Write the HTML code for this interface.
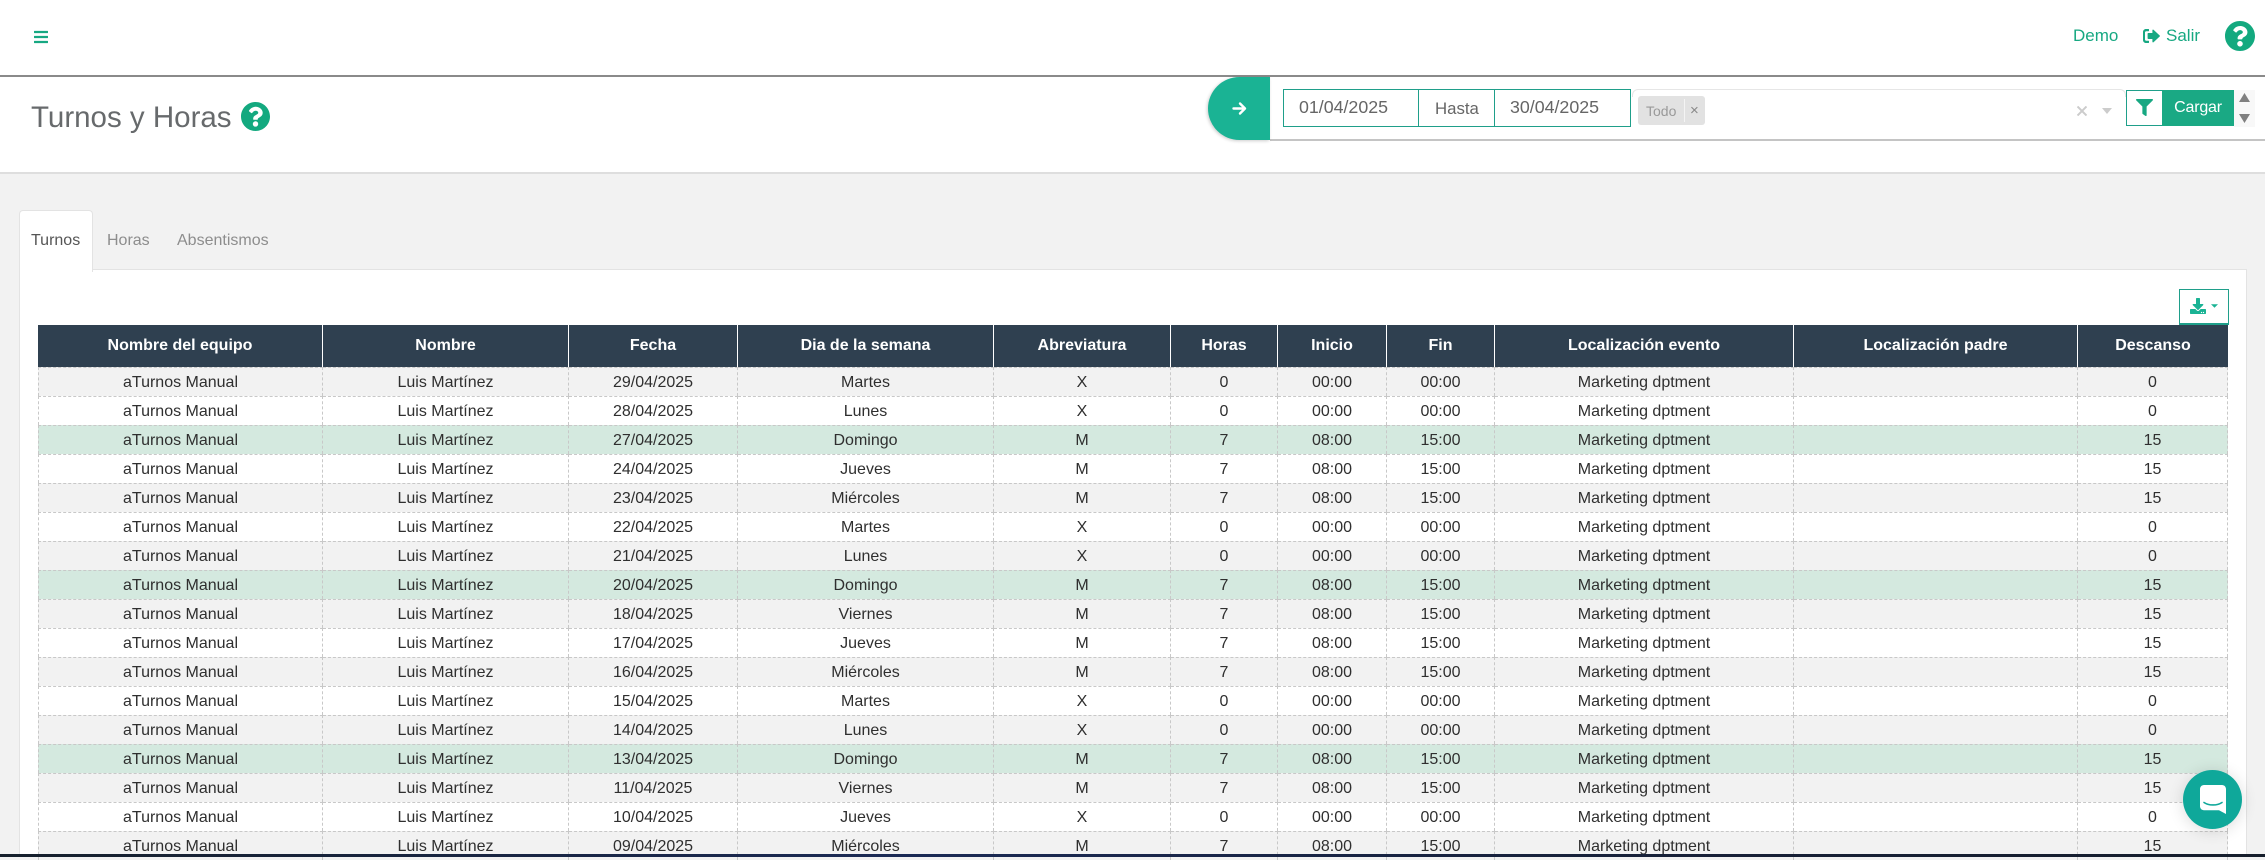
<!DOCTYPE html>
<html lang="es"><head><meta charset="utf-8"><title>Turnos y Horas</title>
<style>
*{box-sizing:border-box}
html,body{margin:0;padding:0;width:2265px;height:857px;overflow:hidden;background:#f2f2f2;font-family:"Liberation Sans",Arial,sans-serif;color:#333}
.abs{position:absolute}
svg{display:block}
#top{left:0;top:0;width:2265px;height:77px;background:#fff;border-bottom:2px solid #8a8a8a}
#sub{left:0;top:77px;width:2265px;height:97px;background:#fff;border-bottom:2px solid #dedede}
.g{color:#17a882}
h1{position:absolute;left:31px;top:98px;margin:0;font-weight:400;font-size:29.5px;line-height:40px;color:#676a6c}
#bar{left:1270px;top:77px;width:995px;height:64px;background:#fff;border-bottom:2px solid #c4c4c4}
#pill{left:1208px;top:77px;width:62px;height:63px;background:#1ab394;border-radius:32px 0 0 32px;box-shadow:-1px 1px 3px rgba(0,0,0,.2)}
.box{position:absolute;top:89px;height:38px;border:1px solid #1f9f8a;background:#fff;font-size:17.800px;line-height:35px;color:#666}
#ms{left:1632px;top:89px;width:494px;height:8px;border:1px solid #e6e6e6;border-bottom:0;border-radius:6px 6px 0 0;background:#fff}
#chip{left:1638px;top:96px;width:67px;height:29px;background:#e2e2e2;border-radius:3px;font-size:14px;color:#999;line-height:30px}
#tabs{left:19px;top:210px;width:74px;height:62px;background:#fff;border:1px solid #e3e3e3;border-bottom:0;border-radius:4px 4px 0 0;z-index:2}
.tab{position:absolute;top:229px;font-size:16px;line-height:24px;color:#8d8d8d;z-index:3}
#panel{left:19px;top:269px;width:2228px;height:588px;background:#fff;border:1px solid #e3e3e3;border-bottom:0}
#dl{left:2179px;top:289px;width:50px;height:36px;border:1px solid #1f9f8a;border-bottom:2px solid #1f9f8a;background:#fff}
table{position:absolute;left:38px;top:325px;width:2190px;border-collapse:separate;border-spacing:0;table-layout:fixed;font-size:16px}
th{height:42px;background:#2f4050;color:#fff;font-weight:700;text-align:center;padding:0;border-right:1px solid #fff}
th:last-child{border-right:0}
td{height:29px;padding:1px 0 0;text-align:center;border-right:1px dashed #c8c8c8;border-top:1px dashed #c8c8c8;color:#2f2f2f;white-space:nowrap}
td:first-child{border-left:1px dashed #c8c8c8}
.o td{background:#f2f2f2}.w td{background:#fff}.v td{background:#d4e9df}
#dark{left:0;top:854px;width:2265px;height:3px;background:linear-gradient(90deg,#16202c,#1b2a55 40%,#17213a 70%,#161e2c);z-index:9}
#chat{left:2183px;top:770px;width:59px;height:59px;border-radius:50%;background:#0fa89a;box-shadow:0 2px 16px rgba(0,0,0,.14);z-index:8}
</style></head><body>

<div class="abs" id="top"></div>
<svg class="abs" style="left:34px;top:29px" width="14" height="16" viewBox="0 0 448 512" fill="#17a882"><path d="M16 132h416c8.837 0 16-7.163 16-16V76c0-8.837-7.163-16-16-16H16C7.163 60 0 67.163 0 76v40c0 8.837 7.163 16 16 16zm0 160h416c8.837 0 16-7.163 16-16v-40c0-8.837-7.163-16-16-16H16c-8.837 0-16 7.163-16 16v40c0 8.837 7.163 16 16 16zm0 160h416c8.837 0 16-7.163 16-16v-40c0-8.837-7.163-16-16-16H16c-8.837 0-16 7.163-16 16v40c0 8.837 7.163 16 16 16z"/></svg>
<div class="abs g" style="left:2073px;top:26px;font-size:17px;line-height:20px">Demo</div>
<svg class="abs" style="left:2143px;top:29px" width="17" height="14" viewBox="0 0 17 14" fill="#17a882"><path d="M5.500 0H3C1.300 0 0 1.300 0 3v8c0 1.700 1.300 3 3 3h2.500c.3 0 .5-.2.500-.5v-1.300c0-.3-.2-.5-.5-.5H3.200c-.7 0-1.200-.5-1.200-1.200V3.500c0-.7.500-1.200 1.200-1.200h2.300c.3 0 .5-.2.500-.5V.5c0-.3-.2-.5-.5-.5z"/><path d="M10.500.8c-.4-.4-1.100-.1-1.100.5V4H5.300c-.4 0-.7.300-.7.700v4.600c0 .4.300.7.700.7h4.100v2.700c0 .6.700.9 1.100.5l6.200-5.700c.3-.3.300-.7 0-1z"/></svg>
<div class="abs g" style="left:2166px;top:26px;font-size:17px;line-height:20px">Salir</div>
<svg class="abs" style="left:2225px;top:21px" width="30" height="30" viewBox="8 8 496 496" fill="#13a97f"><path d="M504 256c0 136.997-111.043 248-248 248S8 392.997 8 256C8 119.083 119.043 8 256 8s248 111.083 248 248zM262.655 90c-54.497 0-89.255 22.957-116.549 63.758-3.536 5.286-2.353 12.415 2.715 16.258l34.699 26.31c5.205 3.947 12.621 3.008 16.665-2.122 17.864-22.658 30.113-35.797 57.303-35.797 20.429 0 45.698 13.148 45.698 32.958 0 14.976-12.363 22.667-32.534 33.976C247.128 238.528 216 254.941 216 296v4c0 6.627 5.373 12 12 12h56c6.627 0 12-5.373 12-12v-1.333c0-28.462 83.186-29.647 83.186-106.667 0-58.002-60.165-102-116.531-102zM256 338c-25.365 0-46 20.635-46 46 0 25.364 20.635 46 46 46s46-20.636 46-46c0-25.365-20.635-46-46-46z"/></svg>

<div class="abs" id="sub"></div>
<h1>Turnos y Horas</h1>
<svg class="abs" style="left:241px;top:102px" width="29" height="29" viewBox="8 8 496 496" fill="#13a97f"><path d="M504 256c0 136.997-111.043 248-248 248S8 392.997 8 256C8 119.083 119.043 8 256 8s248 111.083 248 248zM262.655 90c-54.497 0-89.255 22.957-116.549 63.758-3.536 5.286-2.353 12.415 2.715 16.258l34.699 26.31c5.205 3.947 12.621 3.008 16.665-2.122 17.864-22.658 30.113-35.797 57.303-35.797 20.429 0 45.698 13.148 45.698 32.958 0 14.976-12.363 22.667-32.534 33.976C247.128 238.528 216 254.941 216 296v4c0 6.627 5.373 12 12 12h56c6.627 0 12-5.373 12-12v-1.333c0-28.462 83.186-29.647 83.186-106.667 0-58.002-60.165-102-116.531-102zM256 338c-25.365 0-46 20.635-46 46 0 25.364 20.635 46 46 46s46-20.636 46-46c0-25.365-20.635-46-46-46z"/></svg>

<div class="abs" id="bar"></div>
<div class="abs" id="pill"></div>
<svg class="abs" style="left:1232px;top:101px" width="15" height="15" viewBox="0 0 15 15" fill="none" stroke="#fff" stroke-width="2.400" stroke-linecap="round" stroke-linejoin="round"><path d="M1.500 7.500h11M8 2.500l5 5-5 5"/></svg>
<div class="box" style="left:1283px;width:136px;padding-left:15px">01/04/2025</div>
<div class="box" style="left:1418px;width:77px;padding-left:16px;font-size:16.800px;line-height:38px">Hasta</div>
<div class="box" style="left:1494px;width:137px;padding-left:15px">30/04/2025</div>
<div class="abs" id="ms"></div>
<div class="abs" id="chip"><span style="position:absolute;left:8px">Todo</span><span style="position:absolute;left:46px;top:3px;height:23px;border-left:1px solid #f4f4f4"></span><span style="position:absolute;left:52px;font-size:15px;color:#888">×</span></div>
<svg class="abs" style="left:2077px;top:106px" width="10" height="10" viewBox="0 0 10 10" stroke="#ccc" stroke-width="2"><path d="M.5.500l9 9M9.500.500l-9 9"/></svg>
<svg class="abs" style="left:2102px;top:108px" width="10" height="6" viewBox="0 0 10 6" fill="#ccc"><path d="M0 0h10L5 6z"/></svg>
<div class="abs" style="left:2126px;top:90px;width:37px;height:36px;background:#fff;border:1px solid #1f9f8a"></div>
<svg class="abs" style="left:2136px;top:99px" width="17" height="17" viewBox="0 0 512 512" fill="#17a882"><path d="M487.976 0H24.028C2.710 0-8.047 25.866 7.058 40.971L192 225.941V432c0 7.831 3.821 15.170 10.237 19.662l80 55.980C298.020 518.690 320 507.493 320 487.980V225.941l184.947-184.970C520.021 25.896 509.338 0 487.976 0z"/></svg>
<div class="abs" style="left:2162px;top:90px;width:72px;height:36px;background:#1aa984;color:#fff;font-size:16px;line-height:36px;text-align:center;letter-spacing:-.2px">Cargar</div>
<div class="abs" style="left:2234px;top:90px;width:21px;height:37px;background:#f8f8f8"></div>
<svg class="abs" style="left:2238px;top:93px" width="13" height="30" viewBox="0 0 13 30" fill="#808080"><path d="M1 9L6.500 0 12 9zM1 21h11L6.500 30z"/></svg>

<div class="abs" id="panel"></div>
<div class="abs" id="tabs"></div>
<div class="tab" style="left:31px;color:#555">Turnos</div>
<div class="tab" style="left:107px">Horas</div>
<div class="tab" style="left:177px">Absentismos</div>

<div class="abs" id="dl"></div>
<svg class="abs" style="left:2190px;top:298px" width="16" height="16" viewBox="0 0 512 512" fill="#1ab394"><path d="M216 0h80c13.300 0 24 10.700 24 24v168h87.700c17.800 0 26.700 21.500 14.100 34.100L269.700 378.300c-7.500 7.500-19.800 7.500-27.300 0L90.100 226.100c-12.600-12.600-3.700-34.100 14.100-34.100H192V24c0-13.300 10.700-24 24-24zm296 376v112c0 13.300-10.700 24-24 24H24c-13.300 0-24-10.700-24-24V376c0-13.300 10.700-24 24-24h146.700l49 49c20.100 20.100 52.500 20.100 72.600 0l49-49H488c13.300 0 24 10.700 24 24zm-124 88c0-11-9-20-20-20s-20 9-20 20 9 20 20 20 20-9 20-20zm64 0c0-11-9-20-20-20s-20 9-20 20 9 20 20 20 20-9 20-20z"/></svg>
<svg class="abs" style="left:2211px;top:304px" width="7" height="4" viewBox="0 0 8 4" fill="#1ab394"><path d="M0 0h8L4 4z"/></svg>

<table>
<colgroup><col style="width:285px"><col style="width:246px"><col style="width:169px"><col style="width:256px"><col style="width:177px"><col style="width:107px"><col style="width:109px"><col style="width:108px"><col style="width:299px"><col style="width:284px"><col style="width:150px"></colgroup>
<thead><tr><th>Nombre del equipo</th><th>Nombre</th><th>Fecha</th><th>Dia de la semana</th><th>Abreviatura</th><th>Horas</th><th>Inicio</th><th>Fin</th><th>Localización evento</th><th>Localización padre</th><th>Descanso</th></tr></thead>
<tbody>
<tr class="o"><td>aTurnos Manual</td><td>Luis Martínez</td><td>29/04/2025</td><td>Martes</td><td>X</td><td>0</td><td>00:00</td><td>00:00</td><td>Marketing dptment</td><td></td><td>0</td></tr>
<tr class="w"><td>aTurnos Manual</td><td>Luis Martínez</td><td>28/04/2025</td><td>Lunes</td><td>X</td><td>0</td><td>00:00</td><td>00:00</td><td>Marketing dptment</td><td></td><td>0</td></tr>
<tr class="v"><td>aTurnos Manual</td><td>Luis Martínez</td><td>27/04/2025</td><td>Domingo</td><td>M</td><td>7</td><td>08:00</td><td>15:00</td><td>Marketing dptment</td><td></td><td>15</td></tr>
<tr class="w"><td>aTurnos Manual</td><td>Luis Martínez</td><td>24/04/2025</td><td>Jueves</td><td>M</td><td>7</td><td>08:00</td><td>15:00</td><td>Marketing dptment</td><td></td><td>15</td></tr>
<tr class="o"><td>aTurnos Manual</td><td>Luis Martínez</td><td>23/04/2025</td><td>Miércoles</td><td>M</td><td>7</td><td>08:00</td><td>15:00</td><td>Marketing dptment</td><td></td><td>15</td></tr>
<tr class="w"><td>aTurnos Manual</td><td>Luis Martínez</td><td>22/04/2025</td><td>Martes</td><td>X</td><td>0</td><td>00:00</td><td>00:00</td><td>Marketing dptment</td><td></td><td>0</td></tr>
<tr class="o"><td>aTurnos Manual</td><td>Luis Martínez</td><td>21/04/2025</td><td>Lunes</td><td>X</td><td>0</td><td>00:00</td><td>00:00</td><td>Marketing dptment</td><td></td><td>0</td></tr>
<tr class="v"><td>aTurnos Manual</td><td>Luis Martínez</td><td>20/04/2025</td><td>Domingo</td><td>M</td><td>7</td><td>08:00</td><td>15:00</td><td>Marketing dptment</td><td></td><td>15</td></tr>
<tr class="o"><td>aTurnos Manual</td><td>Luis Martínez</td><td>18/04/2025</td><td>Viernes</td><td>M</td><td>7</td><td>08:00</td><td>15:00</td><td>Marketing dptment</td><td></td><td>15</td></tr>
<tr class="w"><td>aTurnos Manual</td><td>Luis Martínez</td><td>17/04/2025</td><td>Jueves</td><td>M</td><td>7</td><td>08:00</td><td>15:00</td><td>Marketing dptment</td><td></td><td>15</td></tr>
<tr class="o"><td>aTurnos Manual</td><td>Luis Martínez</td><td>16/04/2025</td><td>Miércoles</td><td>M</td><td>7</td><td>08:00</td><td>15:00</td><td>Marketing dptment</td><td></td><td>15</td></tr>
<tr class="w"><td>aTurnos Manual</td><td>Luis Martínez</td><td>15/04/2025</td><td>Martes</td><td>X</td><td>0</td><td>00:00</td><td>00:00</td><td>Marketing dptment</td><td></td><td>0</td></tr>
<tr class="o"><td>aTurnos Manual</td><td>Luis Martínez</td><td>14/04/2025</td><td>Lunes</td><td>X</td><td>0</td><td>00:00</td><td>00:00</td><td>Marketing dptment</td><td></td><td>0</td></tr>
<tr class="v"><td>aTurnos Manual</td><td>Luis Martínez</td><td>13/04/2025</td><td>Domingo</td><td>M</td><td>7</td><td>08:00</td><td>15:00</td><td>Marketing dptment</td><td></td><td>15</td></tr>
<tr class="o"><td>aTurnos Manual</td><td>Luis Martínez</td><td>11/04/2025</td><td>Viernes</td><td>M</td><td>7</td><td>08:00</td><td>15:00</td><td>Marketing dptment</td><td></td><td>15</td></tr>
<tr class="w"><td>aTurnos Manual</td><td>Luis Martínez</td><td>10/04/2025</td><td>Jueves</td><td>X</td><td>0</td><td>00:00</td><td>00:00</td><td>Marketing dptment</td><td></td><td>0</td></tr>
<tr class="o"><td>aTurnos Manual</td><td>Luis Martínez</td><td>09/04/2025</td><td>Miércoles</td><td>M</td><td>7</td><td>08:00</td><td>15:00</td><td>Marketing dptment</td><td></td><td>15</td></tr>
</tbody></table>

<div class="abs" id="chat"><svg style="position:absolute;left:17px;top:15px" width="26" height="29" viewBox="0 0 26 29"><path d="M4 0h18c2.200 0 4 1.800 4 4v25l-7-3.700H4c-2.200 0-4-1.800-4-4V4c0-2.200 1.800-4 4-4z" fill="#fff"/><path d="M4 17.500c5 3.300 13 3.300 18 0" fill="none" stroke="#0fa89a" stroke-width="1.600" stroke-linecap="round"/></svg></div>
<div class="abs" id="dark"></div>
</body></html>
